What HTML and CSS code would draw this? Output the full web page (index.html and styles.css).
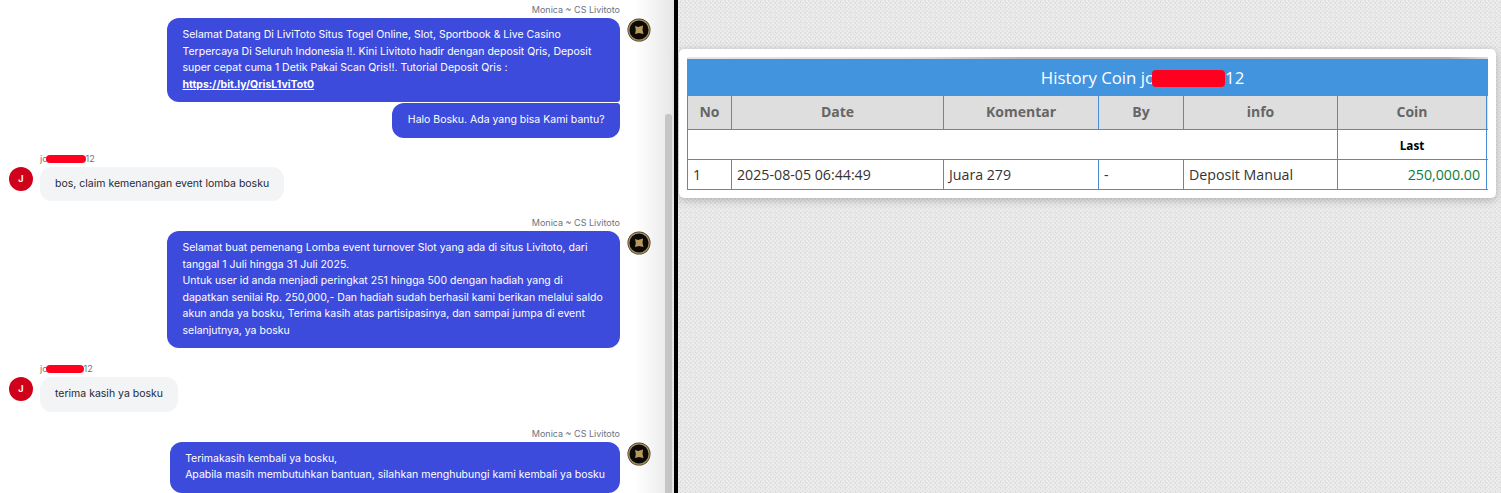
FILE: index.html
```html
<!DOCTYPE html>
<html lang="en">
<head>
  <meta charset="UTF-8" />
  <title>History Coin</title>
  <link rel="stylesheet" href="styles.css">
</head>
<body>
  <div class="chat-pane">
    <div class="chat-scroll">
      <div class="msg msg-agent">
        <div class="msg-body">
          <div class="msg-name">Monica ~ CS Livitoto</div>
          <div class="bubble bubble-agent wide join-next">
            Selamat Datang Di LiviToto Situs Togel Online, Slot, Sportbook &amp; Live Casino<br>
            Terpercaya Di Seluruh Indonesia !!. Kini Livitoto hadir dengan deposit Qris, Deposit<br>
            super cepat cuma 1 Detik Pakai Scan Qris!!. Tutorial Deposit Qris :<br>
            <a href="#">https://bit.ly/QrisL1viTot0</a>
          </div>
          <div class="bubble bubble-agent second">Halo Bosku. Ada yang bisa Kami bantu?</div>
        </div>
        <div class="agent-avatar">
          <svg viewBox="0 0 24 24" width="24" height="24">
            <circle cx="12" cy="12" r="11.5" fill="#3a3226"/>
            <circle cx="12" cy="12" r="10.2" fill="#0b0a08" stroke="#a98f58" stroke-width="1.3"/>
            <path d="M8 8 L11 9 L16 7.5 L15.5 12 L16.5 16 L12 15 L8 16 L8.8 12 Z" fill="#b79a5b"/>
          </svg>
        </div>
      </div>

      <div class="msg msg-user user-msg">
        <div class="user-avatar">J</div>
        <div class="msg-body">
          <div class="msg-name">jo<span class="redact redact-name"></span>12</div>
          <div class="bubble bubble-user">bos, claim kemenangan event lomba bosku</div>
        </div>
      </div>

      <div class="msg msg-agent agent-msg">
        <div class="msg-body">
          <div class="msg-name">Monica ~ CS Livitoto</div>
          <div class="bubble bubble-agent wide">
            Selamat buat pemenang Lomba event turnover Slot yang ada di situs Livitoto, dari<br>
            tanggal 1 Juli hingga 31 Juli 2025.<br>
            Untuk user id anda menjadi peringkat 251 hingga 500 dengan hadiah yang di<br>
            dapatkan senilai Rp. 250,000,- Dan hadiah sudah berhasil kami berikan melalui saldo<br>
            akun anda ya bosku, Terima kasih atas partisipasinya, dan sampai jumpa di event<br>
            selanjutnya, ya bosku
          </div>
        </div>
        <div class="agent-avatar">
          <svg viewBox="0 0 24 24" width="24" height="24">
            <circle cx="12" cy="12" r="11.5" fill="#3a3226"/>
            <circle cx="12" cy="12" r="10.2" fill="#0b0a08" stroke="#a98f58" stroke-width="1.3"/>
            <path d="M8 8 L11 9 L16 7.5 L15.5 12 L16.5 16 L12 15 L8 16 L8.8 12 Z" fill="#b79a5b"/>
          </svg>
        </div>
      </div>

      <div class="msg msg-user user-msg">
        <div class="user-avatar">J</div>
        <div class="msg-body">
          <div class="msg-name">jo<span class="redact redact-name short"></span>12</div>
          <div class="bubble bubble-user">terima kasih ya bosku</div>
        </div>
      </div>

      <div class="msg msg-agent agent-msg">
        <div class="msg-body">
          <div class="msg-name">Monica ~ CS Livitoto</div>
          <div class="bubble bubble-agent tight">
            Terimakasih kembali ya bosku,<br>
            Apabila masih membutuhkan bantuan, silahkan menghubungi kami kembali ya bosku
          </div>
        </div>
        <div class="agent-avatar">
          <svg viewBox="0 0 24 24" width="24" height="24">
            <circle cx="12" cy="12" r="11.5" fill="#3a3226"/>
            <circle cx="12" cy="12" r="10.2" fill="#0b0a08" stroke="#a98f58" stroke-width="1.3"/>
            <path d="M8 8 L11 9 L16 7.5 L15.5 12 L16.5 16 L12 15 L8 16 L8.8 12 Z" fill="#b79a5b"/>
          </svg>
        </div>
      </div>
    </div>
    <div class="scroll-track"><div class="scroll-thumb"></div></div>
  </div>

  <div class="divider"></div>

  <div class="history-pane">
    <div class="card">
      <div class="clip-strip"></div>
      <div class="table-wrap">
        <table class="history">
          <colgroup>
            <col class="col-no">
            <col class="col-date">
            <col class="col-komentar">
            <col class="col-by">
            <col class="col-info">
            <col class="col-coin">
            <col class="col-extra">
          </colgroup>
          <tr>
            <th colspan="7" class="title">History Coin jo<span class="redact redact-title"></span>12</th>
          </tr>
          <tr class="head">
            <th>No</th>
            <th>Date</th>
            <th>Komentar</th>
            <th>By</th>
            <th>info</th>
            <th>Coin</th>
            <th></th>
          </tr>
          <tr class="last-row">
            <td colspan="5"></td>
            <td class="last">Last</td>
            <td></td>
          </tr>
          <tr class="data-row">
            <td>1</td>
            <td>2025-08-05 06:44:49</td>
            <td>Juara 279</td>
            <td>-</td>
            <td>Deposit Manual</td>
            <td class="amount">250,000.00</td>
            <td></td>
          </tr>
        </table>
      </div>
    </div>
  </div>
</body>
</html>
```

FILE: styles.css
```css
* {
  box-sizing: border-box;
  margin: 0;
  padding: 0;
}

body {
  width: 1501px;
  height: 493px;
  display: flex;
  overflow: hidden;
  background: #fff;
}

/* left side: chat */
.chat-pane {
  width: 674px;
  height: 493px;
  flex: none;
  display: flex;
  overflow: hidden;
  font-family: Inter, "Liberation Sans", sans-serif;
  background: linear-gradient(90deg, #fff 0, #fff 635px, #e6e6e6 674px);
}

.chat-scroll {
  width: 664px;
  flex: none;
  padding-top: 4px;
}

.scroll-track {
  width: 10px;
  padding: 114px 2px 0 1px;
}

.scroll-thumb {
  height: 379px;
  background: #c6c6c6;
  border-radius: 3px 3px 0 0;
}

.msg {
  display: flex;
  padding: 0 9px;
}

.msg-agent {
  justify-content: flex-end;
  padding-right: 13px;
}

.msg-agent .msg-body {
  display: flex;
  flex-direction: column;
  align-items: flex-end;
}

.msg-name {
  font-size: 9px;
  line-height: 11px;
  color: #6b7280;
  margin-bottom: 3px;
  white-space: nowrap;
}

.bubble {
  font-size: 10.5px;
  line-height: 16.5px;
  border-radius: 12px;
  padding: 9px 15.5px;
}

.bubble-agent {
  background: #3c4bdc;
  color: #fff;
}

.bubble-agent a {
  color: #fff;
  font-weight: 700;
}

.bubble-agent.wide {
  width: 453px;
}

.bubble-agent.join-next {
  border-bottom-right-radius: 3px;
}

.bubble-agent.second {
  margin-top: 1px;
  border-top-right-radius: 3px;
}

.bubble-agent.tight {
  padding: 9px 15px;
}

.bubble-user {
  background: #f3f4f6;
  color: #1f2937;
  padding: 9px 15px;
}

.agent-avatar {
  width: 24px;
  height: 24px;
  margin: 14px 0 0 7px;
}

.user-avatar {
  width: 24px;
  height: 24px;
  margin: 14px 7px 0 0;
  border-radius: 50%;
  background: #d0021b;
  color: #fff;
  font-size: 9px;
  font-weight: 700;
  text-align: center;
  line-height: 24px;
}

.user-msg { margin-top: 15px; }
.agent-msg { margin-top: 16px; }

.redact {
  display: inline-block;
  background: #ff001e;
  border-radius: 4px;
}

.redact-name {
  width: 40px;
  height: 8px;
  margin-left: -2px;
  vertical-align: -1px;
}

.redact-name.short {
  width: 38px;
}

.divider {
  width: 4px;
  height: 493px;
  flex: none;
  background: #000;
}

/* right side: history table */
.history-pane {
  flex: 1;
  height: 493px;
  padding: 49px 5px 0 1px;
  background-color: #e6e6e6;
  background-image:
    radial-gradient(#d6d6d6 0.7px, transparent 0.8px),
    repeating-conic-gradient(#e3e3e3 0 25%, #ededed 0 50%);
  background-size: 5px 5px, 4px 4px;
}

.card {
  background: #fff;
  border-radius: 5px;
  padding: 8px 8px 0;
  height: 149px;
  box-shadow: 0 2px 8px rgba(0, 0, 0, 0.25);
  font-family: "Open Sans", "Noto Sans", sans-serif;
}

.clip-strip {
  width: 801px;
  height: 2px;
  background: linear-gradient(90deg, #e6e6e6, #d8d8d8 30%, #b4b4b4 42%, #b0b0b0 95%, #dcdcdc);
}

.table-wrap {
  width: 801px;
  overflow: hidden;
}

.history {
  width: 910px;
  border-collapse: collapse;
  table-layout: fixed;
  font-size: 14.2px;
  color: #333;
}

.history th,
.history td {
  border: 1px solid #4a8dd3;
}

.history .title {
  height: 36px;
  padding-bottom: 1px;
  background: #4394df;
  border-color: #4394df;
  color: #fff;
  font-size: 16.8px;
  font-weight: 400;
}

.redact-title {
  width: 73px;
  height: 17px;
  margin-left: -3px;
  vertical-align: -3px;
}

.head th {
  height: 34px;
  padding-bottom: 2px;
  background: #dedede;
  color: #666;
  font-size: 14px;
  font-weight: 700;
}

.col-no { width: 44px; }
.col-date { width: 212px; }
.col-komentar { width: 155px; }
.col-by { width: 85px; }
.col-info { width: 154px; }
.col-coin { width: 149px; }
.col-extra { width: 111px; }

.last-row td {
  height: 30px;
}

.last {
  text-align: center;
  font-size: 11.7px;
  font-weight: 700;
  color: #000;
}

.data-row td {
  height: 30px;
  padding: 0 6px 0 5px;
  white-space: nowrap;
}

.amount {
  text-align: right;
  color: #0a7d3c;
}
```
